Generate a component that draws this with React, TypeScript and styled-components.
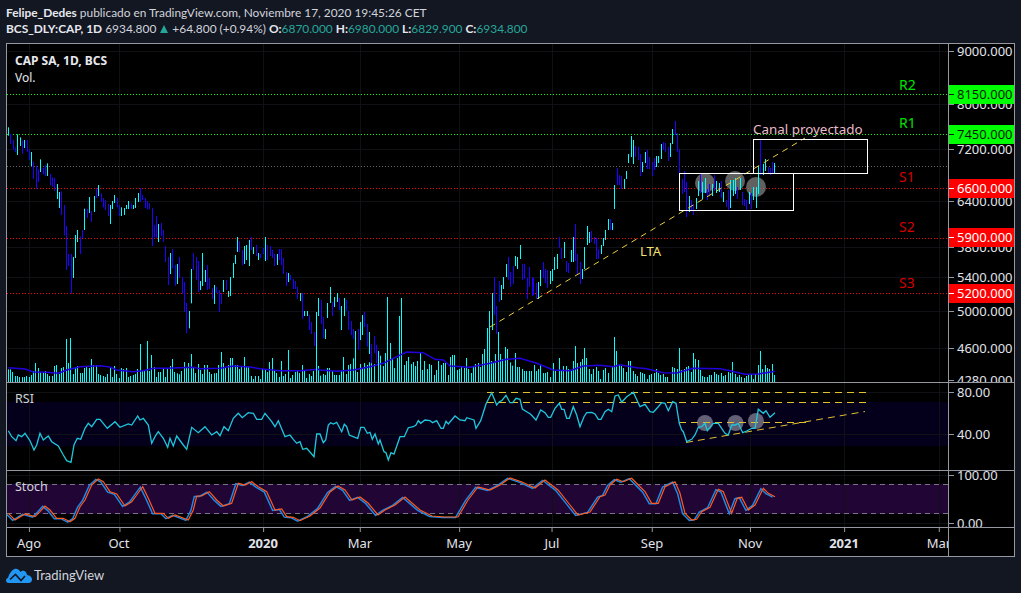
import React from "react";
import styled, { createGlobalStyle } from "styled-components";

const UP = "#00ffff";
const DOWN = "#2200ff";
const FONT = `"Noto Sans", "Open Sans", sans-serif`;
const NARROW = `Lato, "Noto Sans", sans-serif`;

const GlobalStyle = createGlobalStyle`
    html, body {
        margin: 0;
        padding: 0;
        background: #131722;
    }
`;

// price bars traced from the chart: "x,top,bottom,u|d" in crops scaled 3x
const barsA = `25,22,47,u 31,42,72,d 40,60,88,d 46,82,96,d 52,43,105,u 61,52,78,u 67,62,101,d 73,60,84,u 82,60,95,d 88,88,120,d 94,96,138,u 100,125,177,d 109,138,207,d 115,148,186,d 121,118,156,u 130,144,163,d 136,136,168,d 142,130,168,u 151,162,196,d 157,172,200,d 163,174,213,d 172,192,237,u 178,216,264,u 184,214,285,d 193,255,346,d 199,318,450,d 205,402,438,d 214,402,521,d 220,411,474,u 226,345,414,u 232,330,366,u 241,350,402,d 247,330,354,d 253,266,330,u 262,266,294,d 268,231,279,u 274,273,306,d 283,228,276,u 289,204,234,d 295,195,228,u 304,220,244,d 310,234,262,d 316,240,270,d 325,252,288,d 331,255,312,u 337,243,267,u 343,225,249,u 352,234,262,d 358,255,288,d 364,262,288,u 373,264,285,u 379,255,267,u 385,243,267,u 394,250,267,d 400,255,267,u 406,234,264,u 415,219,246,u 421,204,246,d 427,225,240,d 436,234,264,d 442,243,268,d 448,249,268,d 457,264,378,d 463,315,352,d 469,288,354,d 475,312,366,u 484,309,348,d 490,330,366,d 496,378,426,d 505,411,495,d 511,399,462,u 517,387,445,d 526,435,498,d 532,432,492,u 538,411,474,d 547,471,522,d 553,486,576,d 559,549,640,d 568,573,625,u 574,447,550,u 580,399,450,d 589,411,480,d 595,423,516,d 601,483,510,u 607,399,498,u 616,450,486,u 622,435,510,d 628,474,507,d 637,504,537,d 643,495,552,u 649,501,519,d 658,510,576,d 664,519,552,d 670,480,516,u 679,480,510,d 685,513,531,u 691,471,528,u 700,429,474,u 706,405,432,u 712,351,396,u 718,363,396,d 727,390,435,d 733,378,432,u 739,375,420,u 748,360,438,u 754,351,390,d 760,381,402,u 769,375,408,d 775,399,420,u 781,402,414,d 790,384,402,d 796,351,423,u 802,375,420,d 811,378,408,d 817,390,414,d 823,402,438,d 832,402,435,u 838,387,420,d 844,387,435,d 850,414,462,d 859,456,498,d 865,459,486,u 871,465,480,d 880,477,507,d 886,483,507,d 892,501,537,d 901,519,543,u 907,519,597,d 913,573,588,u 922,573,588,u 928,585,630,d 934,606,642,d 943,636,678,d 949,576,770,u 955,534,588,u`;
const barsB = `3,300,372,d 10,351,414,d 16,387,417,u 22,309,354,u 31,261,309,u 37,306,348,d 43,291,321,u 52,279,306,u 58,294,330,d 64,318,390,u 73,294,348,u 79,300,333,d 85,333,390,d 94,363,405,d 100,387,417,d 106,396,450,u 115,387,450,d 121,366,420,u 127,345,405,u 133,336,381,d 142,372,440,d 148,396,462,u 154,432,490,d 163,408,460,d 169,435,490,d 175,456,546,u 501,387,453,u 507,333,453,u 516,279,390,u 522,231,345,d 528,318,402,d 537,243,306,d 543,255,300,u 549,231,267,u 558,192,231,u 564,171,240,d 570,216,261,d 579,198,252,d 585,168,198,u 591,171,207,u 600,135,177,u 606,192,240,d 612,192,237,d 621,234,297,d 627,201,261,d 636,231,288,d 640,234,285,d 648,249,297,d 654,246,297,u 660,210,258,u 669,186,234,d 675,207,249,d 681,210,264,d 690,213,252,u 696,207,243,u 702,171,210,u 711,162,207,u 717,111,144,d 723,144,177,d 732,126,174,u 738,183,216,d 744,189,219,d 753,150,186,u 759,111,186,u 765,72,183,d 771,162,222,d 780,186,252,d 786,207,237,u 792,141,207,u 801,78,135,u 807,96,129,u 813,93,126,d 822,111,132,d 828,114,177,d 834,147,177,d 843,135,162,u 849,114,138,u 855,90,120,u`;
const barsC = `25,297,330,u 31,297,330,d 37,309,330,u 43,195,267,u 52,144,195,d 58,165,195,d 64,168,207,d 73,177,207,u 79,153,177,u 85,102,129,u 94,48,111,u 100,60,132,u 106,78,111,d 115,81,120,d 121,102,168,d 127,126,156,u 136,96,129,u 142,90,147,d 148,111,147,d 157,126,168,d 163,114,150,d 169,108,141,u 175,108,129,u 184,72,117,u 190,66,90,d 196,69,96,d 205,81,123,d 211,69,111,u 217,27,72,u 226,3,45,d 232,39,96,d 238,87,165,d 247,177,222,d 253,153,216,d 259,186,291,d 268,228,276,u 274,240,270,d 280,252,285,d 289,234,267,u 295,183,228,u 301,159,219,d 307,186,237,u 316,174,219,u 322,207,240,d 328,192,228,d 337,192,228,u 343,165,213,d 349,183,219,u 358,189,216,u 364,183,234,d 370,216,246,u 379,240,261,d 385,210,270,d 391,180,264,u 400,180,228,u 406,174,222,u 412,201,237,d 421,174,210,u 427,216,255,d 433,237,258,d 439,240,273,d 448,216,252,u 454,219,267,d 460,201,240,u 469,201,264,u 475,138,222,u 481,60,165,d 490,132,165,u 496,117,153,u 505,141,162,d 511,144,165,d 517,126,159,d 523,129,162,u`;

// volume bars: "x:top" in the same crops
const volA = `25:748 31:748 37:756 46:768 52:768 58:771 67:771 73:771 79:768 88:771 94:765 100:753 106:729 115:744 121:756 130:756 136:753 142:762 148:768 157:768 163:738 169:735 178:762 184:744 190:741 199:657 205:729 211:654 220:762 226:741 232:738 241:759 247:759 253:744 259:738 268:744 274:717 280:735 289:735 295:762 301:765 310:768 316:771 322:762 331:744 337:771 343:738 349:762 358:774 364:744 370:747 379:744 385:771 391:768 400:765 406:762 412:747 421:672 427:753 433:753 442:663 448:753 454:705 463:741 469:771 475:756 481:756 490:747 496:771 502:747 511:738 517:717 523:756 532:760 538:763 544:753 553:726 559:741 565:729 574:702 580:741 586:759 595:732 601:750 607:762 613:735 622:735 628:756 634:762 643:760 649:759 655:735 664:696 670:729 676:744 685:735 691:714 697:714 706:735 712:735 718:747 724:741 733:711 739:741 745:741 754:768 760:777 766:768 775:768 781:777 787:747 796:750 802:756 808:726 817:714 823:753 829:759 838:771 844:723 850:768 856:762 865:690 871:774 877:765 886:756 892:753 898:759 907:735 913:750 919:774 928:762 934:768 940:753 949:576 955:738`;
const volB = `1:530 10:525 16:528 22:507 28:507 37:516 43:528 49:528 58:528 64:516 70:474 79:525 85:498 91:495 100:478 106:396 112:519 121:495 127:507 133:492 142:498 148:490 154:486 163:495 175:456 181:470 190:501 196:462 202:294 211:432 217:477 223:507 232:477 238:351 244:297 253:498 259:486 265:474 274:495 280:489 286:501 292:486 301:459 307:513 313:486 322:510 328:495 334:498 343:528 349:513 355:486 364:498 370:492 376:492 385:528 391:474 397:468 403:468 412:513 418:510 424:504 433:507 439:477 445:510 454:522 460:504 466:495 475:492 481:504 487:465 493:450 502:387 508:447 514:486 520:492 526:465 535:399 541:465 547:480 556:444 562:450 571:490 577:500 586:462 592:504 598:504 607:510 613:516 619:516 628:516 634:516 643:498 649:516 655:510 661:498 670:522 676:522 682:519 691:534 700:492 706:516 718:477 724:516 730:501 739:501 745:510 754:516 760:486 766:441 772:492 781:489 787:480 793:447 799:477 808:510 814:525 820:510 829:504 835:516 841:540 850:513 856:507 865:522 877:504 883:414 889:456 898:498 904:501 910:507 919:519 925:486 931:486 940:516 946:525 952:531`;
const volC = `22:141 31:126 37:129 43:132 52:147 58:135 64:132 73:129 79:117 85:129 91:135 100:132 106:141 112:141 127:111 133:114 142:117 148:54 154:120 163:117 169:111 175:108 184:126 190:69 196:87 205:90 211:120 217:138 223:141 232:141 238:135 244:135 253:126 259:132 265:135 274:129 280:138 286:135 295:126 301:129 307:96 316:132 322:141 328:135 334:141 343:144 349:138 355:135 364:132 370:147 376:132 385:105 391:63 397:117 406:105 412:114 418:117 427:102 433:135`;

type Point = [number, number];

const parseBars = (src: string, ox: number, oy: number) =>
    src.split(" ").map((b) => {
        const [x, t, m, dir] = b.split(",");
        return { x: ox + Number(x) / 3, top: oy + Number(t) / 3, bottom: oy + Number(m) / 3, up: dir === "u" };
    });

const parseVol = (src: string, ox: number, oy: number) =>
    src.split(" ").map((b) => {
        const [x, t] = b.split(":");
        return { x: ox + Number(x) / 3, top: oy + Number(t) / 3 };
    });

const scale = (pts: number[], ox: number, oy: number): Point[] => {
    const out: Point[] = [];
    for (let i = 0; i < pts.length; i += 2) out.push([ox + pts[i] / 3, oy + pts[i + 1] / 3]);
    return out;
};

const line = (pts: Point[], dx = 0, dy = 0) => pts.map(([x, y]) => `${(x + dx).toFixed(1)},${(y + dy).toFixed(1)}`).join(" ");

const priceBars = [...parseBars(barsA, 0, 120), ...parseBars(barsB, 320, 200), ...parseBars(barsC, 600, 120)];
const volumeBars = [...parseVol(volA, 0, 120), ...parseVol(volB, 320, 200).map((v) => ({ x: v.x, top: v.top - 1 })), ...parseVol(volC, 630, 330)];

const volumeMa: Point[] = [
    ...scale([25, 743, 75, 747, 100, 756, 140, 757, 175, 760, 200, 750, 240, 740, 300, 737, 330, 741, 350, 750, 400, 755, 430, 752, 460, 745, 500, 745, 580, 742, 600, 746, 660, 745, 700, 738, 750, 741, 780, 746, 840, 752, 900, 752, 955, 748], 0, 120),
    ...scale([0, 510, 50, 514, 100, 510, 150, 500, 190, 490, 230, 470, 260, 456, 310, 458, 345, 478, 370, 480, 390, 498, 450, 502, 510, 490, 560, 478, 600, 475, 650, 490, 700, 510, 750, 512, 790, 498, 840, 496, 880, 500, 900, 494, 950, 503], 320, 200),
    ...scale([30, 114, 50, 116, 100, 128, 140, 129, 190, 115, 270, 116, 300, 122, 345, 133, 385, 132, 435, 124], 630, 330),
];

const rsi: Point[] = [
    ...scale([25, 182, 35, 200, 48, 212, 55, 195, 65, 200, 75, 190, 90, 212, 102, 240, 110, 225, 120, 190, 130, 210, 145, 198, 155, 215, 175, 228, 190, 255, 200, 272, 213, 277, 222, 225, 232, 205, 242, 208, 255, 175, 265, 160, 275, 170, 290, 148, 300, 148, 322, 175, 345, 155, 360, 172, 385, 162, 395, 165, 413, 138, 420, 150, 430, 145, 445, 165, 455, 220, 465, 200, 475, 185, 490, 205, 503, 232, 510, 205, 520, 228, 530, 198, 550, 225, 560, 238, 575, 172, 595, 188, 615, 170, 635, 195, 650, 185, 660, 197, 672, 170, 685, 182, 700, 145, 715, 130, 727, 143, 745, 128, 760, 130, 770, 148, 785, 148, 795, 130, 815, 155, 825, 170, 835, 152, 855, 200, 870, 195], 0, 370),
    ...scale([0, 165, 10, 178, 20, 190, 30, 185, 38, 208, 50, 205, 72, 230, 80, 162, 90, 162, 100, 188, 107, 180, 115, 135, 122, 128, 130, 132, 140, 127, 155, 155, 163, 133, 170, 140, 178, 165, 195, 172, 203, 175, 212, 142, 222, 142, 232, 160, 240, 157, 247, 178, 255, 162, 265, 192, 270, 180, 282, 215, 288, 218, 295, 240, 303, 218, 312, 222, 330, 170, 343, 170, 355, 143, 370, 140, 378, 135, 385, 122, 392, 130, 405, 120, 420, 122, 428, 128, 440, 122, 453, 145, 460, 145, 468, 124, 475, 132, 495, 108, 510, 120, 525, 122, 530, 113, 552, 120, 558, 145, 572, 122, 588, 72, 605, 38, 620, 75, 628, 65, 635, 62, 648, 46, 660, 68, 668, 68, 678, 55, 690, 58, 697, 87, 710, 95, 722, 103, 738, 120, 752, 90, 765, 98, 775, 112, 782, 112, 795, 85, 808, 70, 815, 88, 822, 88, 830, 115, 838, 115, 850, 80, 860, 105, 870, 140, 882, 110, 890, 98, 905, 97, 915, 102, 925, 118, 933, 118], 290, 380),
    ...scale([15, 125, 25, 118, 35, 125, 45, 78, 55, 75, 65, 97, 80, 80, 100, 67, 120, 110, 135, 103, 150, 125, 160, 127, 175, 110, 185, 98, 195, 100, 205, 122, 218, 95, 228, 100, 238, 160, 245, 180, 250, 185, 260, 215, 275, 208, 285, 195, 295, 172, 305, 170, 315, 160, 322, 182, 340, 160, 355, 160, 375, 190, 385, 195, 395, 165, 405, 165, 415, 160, 428, 188, 440, 183, 455, 175, 465, 175, 475, 118, 490, 130, 498, 122, 510, 142, 525, 128], 600, 370),
];

const stochD: Point[] = [
    ...scale([25, 430, 45, 450, 75, 432, 105, 440, 120, 425, 135, 408, 150, 420, 170, 445, 190, 445, 210, 455, 225, 445, 240, 410, 255, 390, 275, 345, 295, 327, 310, 335, 330, 365, 350, 372, 375, 408, 395, 395, 410, 375, 428, 350, 445, 385, 465, 430, 490, 430, 505, 445, 525, 435, 565, 450, 580, 420, 590, 378, 605, 378, 628, 365, 650, 390, 670, 408, 695, 400, 715, 340, 735, 345, 755, 335, 775, 350, 800, 365, 825, 420, 845, 417, 860, 440, 880, 442, 900, 452], 0, 370),
    [310, 516], [320, 508], [330, 492], [338, 486], [345, 490], [352, 500], [360, 497], [368, 503], [378, 515], [385, 510], [395, 505], [405, 497], [420, 510], [432, 516], [445, 517], [458, 517], [468, 500], [478, 487], [490, 490], [500, 485], [510, 478], [522, 482], [535, 488], [545, 480], [558, 490], [570, 505], [578, 515], [590, 512],
    ...scale([0, 380, 15, 375, 30, 345, 50, 328, 70, 335, 95, 325, 115, 345, 135, 365, 155, 400, 175, 400, 195, 350, 225, 335, 240, 370, 255, 430, 275, 450, 290, 448, 305, 425, 330, 412, 355, 358, 370, 365, 395, 430, 412, 385, 425, 382, 445, 420, 465, 405, 490, 355, 505, 370, 525, 380], 600, 370),
];

const GRID_X = [29, 119, 263, 360, 459, 552, 652, 750, 844, 939];
const PLOT_LEFT = 7;
const PLOT_RIGHT = 948;

const Page = styled.div`
    width: 1021px;
    height: 593px;
    background: #131722;
    color: #d1d4dc;
    font-family: ${FONT};
    overflow: hidden;
`;

const Header = styled.header`
    height: 43px;
    padding: 5px 0 0 6px;
    box-sizing: border-box;
    font-family: ${NARROW};
    font-size: 11.9px;
    line-height: 16px;
    white-space: nowrap;
`;

const Strong = styled.b`
    font-weight: 700;
    color: #e6e8ee;
`;

const Quote = styled.span`
    color: #26a69a;
`;

const UpTriangle = styled.i`
    display: inline-block;
    width: 0;
    height: 0;
    margin: 0 1px;
    border-left: 4.5px solid transparent;
    border-right: 4.5px solid transparent;
    border-bottom: 8px solid #26a69a;
`;

const Frame = styled.section`
    width: 1009px;
    margin-left: 6px;
    border: 1px solid #9598a1;
    box-sizing: border-box;
    background: #000;
`;

const Pane = styled.div<{ $height: number; $last?: boolean }>`
    display: flex;
    box-sizing: border-box;
    height: ${({ $height }) => $height}px;
    border-bottom: ${({ $last }) => ($last ? "none" : "1px solid #9598a1")};
`;

const Plot = styled.div`
    position: relative;
    width: 941px;
    overflow: hidden;
`;

const Chart = styled.svg`
    display: block;
`;

const Axis = styled.div`
    position: relative;
    flex: 1;
    border-left: 1px solid #9598a1;
    overflow: hidden;
    font-size: 13px;
`;

const Legend = styled.div`
    position: absolute;
    left: 8px;
    top: 8px;
    font-size: 12px;
    line-height: 17px;
    color: #e6e8ee;
`;

const PaneTitle = styled.div<{ $top: number }>`
    position: absolute;
    left: 8px;
    top: ${({ $top }) => $top}px;
    font-size: 12.5px;
    line-height: 16px;
    color: #d1d4dc;
`;

const Tick = styled.div<{ $top: number }>`
    position: absolute;
    left: 0;
    right: 0;
    top: ${({ $top }) => $top}px;
    height: 16px;
    line-height: 16px;
    padding-left: 8px;
    margin-top: -8px;
    color: #e0e3eb;

    &::before {
        content: "";
        position: absolute;
        left: 0;
        top: 8px;
        width: 5px;
        height: 1px;
        background: #9598a1;
    }
`;

const PriceTag = styled.div<{ $top: number; $bg: string; $fg: string }>`
    position: absolute;
    left: 0;
    right: 0;
    top: ${({ $top }) => $top}px;
    height: 19px;
    line-height: 19px;
    padding-left: 8px;
    margin-top: -9px;
    background: ${({ $bg }) => $bg};
    color: ${({ $fg }) => $fg};

    &::before {
        content: "";
        position: absolute;
        left: 0;
        top: 9px;
        width: 5px;
        height: 1px;
        background: ${({ $fg }) => $fg};
    }
`;

const TimeScale = styled.div`
    position: relative;
    width: 941px;
    overflow: hidden;
    font-size: 13px;
`;

const TimeLabel = styled.span<{ $left: number; $bold?: boolean }>`
    position: absolute;
    left: ${({ $left }) => $left}px;
    top: 6px;
    line-height: 18px;
    transform: translateX(-50%);
    font-weight: ${({ $bold }) => ($bold ? 700 : 400)};
    color: #e0e3eb;

    &::before {
        content: "";
        position: absolute;
        left: 50%;
        top: -6px;
        width: 1px;
        height: 4px;
        background: #9598a1;
    }
`;

const TimeCorner = styled.div`
    flex: 1;
    border-left: 1px solid #9598a1;
`;

const Footer = styled.footer`
    display: flex;
    align-items: center;
    gap: 2px;
    height: 36px;
    padding-left: 6px;
    font-family: ${NARROW};
    font-size: 13px;
    color: #d1d4dc;
`;

const GridLines = ({ y0, y1, rows }: { y0: number; y1: number; rows: number[] }) => (
    <g stroke="#0f1115" strokeWidth="1">
        {GRID_X.map((x) => (
            <line key={x} x1={x + 0.5} x2={x + 0.5} y1={y0} y2={y1} />
        ))}
        {rows.map((y) => (
            <line key={y} x1={PLOT_LEFT} x2={PLOT_RIGHT} y1={y + 0.5} y2={y + 0.5} />
        ))}
    </g>
);

const LEVELS = [
    { y: 94, color: "#00ff00" },
    { y: 134, color: "#00ff00" },
    { y: 166, color: "#666666" },
    { y: 188, color: "#ff0000" },
    { y: 238, color: "#ff0000" },
    { y: 293, color: "#ff0000" },
];

const LEVEL_TEXT = [
    { t: "R2", y: 90, c: "#00e000" },
    { t: "R1", y: 128, c: "#00e000" },
    { t: "S1", y: 182, c: "#d40000" },
    { t: "S2", y: 232, c: "#d40000" },
    { t: "S3", y: 288, c: "#d40000" },
];

const MainChart = () => (
    <Chart width={941} height={338} viewBox="7 44 941 338">
        <GridLines y0={44} y1={382} rows={[51, 104, 149, 201, 247, 277, 311, 348]} />
        {LEVELS.map((l) => (
            <line key={l.y} x1={PLOT_LEFT} x2={PLOT_RIGHT} y1={l.y + 0.5} y2={l.y + 0.5} stroke={l.color} strokeDasharray="1 2" />
        ))}
        <circle cx={705} cy={183} r={10} fill="#787878" fillOpacity={0.8} />
        <circle cx={735} cy={181} r={10} fill="#787878" fillOpacity={0.8} />
        <circle cx={756} cy={187} r={10} fill="#787878" fillOpacity={0.8} />
        {volumeBars.map((v, i) => (
            <rect key={i} x={Math.round(v.x)} y={v.top} width={1} height={Math.max(382 - v.top, 1)} fill={UP} />
        ))}
        <polyline points={line(volumeMa)} fill="none" stroke="#2200dd" strokeWidth={1.5} />
        {priceBars.map((b, i) => (
            <rect key={i} x={Math.round(b.x)} y={b.top} width={1} height={b.bottom - b.top} fill={b.up ? UP : DOWN} />
        ))}
        <line x1={490} y1={327} x2={805} y2={138} stroke="#e8cf3f" strokeDasharray="6 5" />
        <rect x={679.5} y={173.5} width={114} height={37} fill="none" stroke="#fff" />
        <rect x={753.5} y={139.5} width={114} height={34} fill="none" stroke="#fff" />
        {LEVEL_TEXT.map((l) => (
            <text key={l.t} x={899} y={l.y} fontSize={14} fill={l.c} fontFamily={FONT}>
                {l.t}
            </text>
        ))}
        <text x={753} y={134} fontSize={13.4} fill="#e8bcc8" fontFamily={FONT}>
            Canal proyectado
        </text>
        <text x={640} y={256} fontSize={13} fill="#f5e070" fontFamily={FONT}>
            LTA
        </text>
    </Chart>
);

const RsiChart = () => (
    <Chart width={941} height={87} viewBox="7 383 941 87">
        <rect x={PLOT_LEFT} y={402} width={941} height={44} fill="#04001c" />
        <GridLines y0={383} y1={470} rows={[392, 434]} />
        <circle cx={705} cy={423} r={8} fill="#8a8a9c" fillOpacity={0.7} />
        <circle cx={735.5} cy={423} r={8} fill="#8a8a9c" fillOpacity={0.7} />
        <circle cx={756} cy={421} r={8} fill="#8a8a9c" fillOpacity={0.7} />
        <g stroke="#e0c030" strokeDasharray="7 5" fill="none">
            <line x1={487} x2={867} y1={392.5} y2={392.5} />
            <line x1={487} x2={867} y1={402.5} y2={402.5} />
            <line x1={679} x2={810} y1={422.5} y2={422.5} />
            <line x1={686} y1={442.5} x2={865} y2={411.5} />
        </g>
        <polyline points={line(rsi)} fill="none" stroke="#1ec8dc" strokeWidth={1.3} />
    </Chart>
);

const StochChart = () => (
    <Chart width={941} height={56} viewBox="7 471 941 56">
        <rect x={PLOT_LEFT} y={484} width={941} height={30} fill="#210535" />
        <GridLines y0={471} y1={527} rows={[475, 523]} />
        <g stroke="#787486" strokeDasharray="5 4">
            <line x1={PLOT_LEFT} x2={PLOT_RIGHT} y1={484.5} y2={484.5} />
            <line x1={PLOT_LEFT} x2={PLOT_RIGHT} y1={513.5} y2={513.5} />
        </g>
        <polyline points={line(stochD, -2.4, 0.4)} fill="none" stroke="#1e88e5" strokeWidth={1.5} />
        <polyline points={line(stochD)} fill="none" stroke="#ff5a1f" strokeWidth={1.2} />
    </Chart>
);

const TradingViewLogo = () => (
    <svg width="26" height="15" viewBox="0 0 26 15">
        <path d="M2.5 15C1 15 0 13.9 0 12.5c0-1.2.8-2.2 2-2.4C3 6 6 1.5 9 .8c2.6-.5 4.3 1 5.5 3.2.8-1 2-1.5 3.2-1.2 2 .4 3 2.2 3.3 4.2 2.7.2 5 2 5 4.7C26 13.5 24.6 15 22.5 15Z" fill="#2196f3" />
        <path d="M4 11.5 9.5 6.5 15 12.5 19 8" fill="none" stroke="#131722" strokeWidth="1.6" />
    </svg>
);

const PRICE_TICKS = [
    { l: "9000.000", y: 7 },
    { l: "8000.000", y: 60 },
    { l: "7200.000", y: 105 },
    { l: "6400.000", y: 157 },
    { l: "5800.000", y: 203 },
    { l: "5400.000", y: 233 },
    { l: "5000.000", y: 267 },
    { l: "4600.000", y: 304 },
    { l: "4280.000", y: 336 },
];

const PRICE_TAGS = [
    { l: "8150.000", y: 50, bg: "#00ff00", fg: "#0a1a0a" },
    { l: "7450.000", y: 90, bg: "#00ff00", fg: "#0a1a0a" },
    { l: "6600.000", y: 144, bg: "#ff0000", fg: "#ffffff" },
    { l: "5900.000", y: 193, bg: "#ff0000", fg: "#ffffff" },
    { l: "5200.000", y: 249, bg: "#ff0000", fg: "#ffffff" },
];

const TIME_LABELS = [
    { l: "Ago", x: 22 },
    { l: "Oct", x: 112 },
    { l: "2020", x: 256, bold: true },
    { l: "Mar", x: 353 },
    { l: "May", x: 452 },
    { l: "Jul", x: 545 },
    { l: "Sep", x: 645 },
    { l: "Nov", x: 743 },
    { l: "2021", x: 837, bold: true },
    { l: "Mar", x: 932 },
];

const App = () => {
    return (
        <Page>
            <GlobalStyle />
            <Header>
                <div>
                    <Strong>Felipe_Dedes</Strong> publicado en TradingView.com, Noviembre 17, 2020 19:45:26 CET
                </div>
                <div>
                    <Strong>BCS_DLY:CAP, 1D</Strong> 6934.800 <UpTriangle /> +64.800 (+0.94%) <Strong>O:</Strong>
                    <Quote>6870.000</Quote> <Strong>H:</Strong>
                    <Quote>6980.000</Quote> <Strong>L:</Strong>
                    <Quote>6829.900</Quote> <Strong>C:</Strong>
                    <Quote>6934.800</Quote>
                </div>
            </Header>
            <Frame>
                <Pane $height={339}>
                    <Plot>
                        <MainChart />
                        <Legend>
                            <Strong>CAP SA, 1D, BCS</Strong>
                            <div>Vol.</div>
                        </Legend>
                    </Plot>
                    <Axis>
                        {PRICE_TICKS.map((t) => (
                            <Tick key={t.l} $top={t.y}>
                                {t.l}
                            </Tick>
                        ))}
                        {PRICE_TAGS.map((t) => (
                            <PriceTag key={t.l} $top={t.y} $bg={t.bg} $fg={t.fg}>
                                {t.l}
                            </PriceTag>
                        ))}
                    </Axis>
                </Pane>
                <Pane $height={88}>
                    <Plot>
                        <RsiChart />
                        <PaneTitle $top={8}>RSI</PaneTitle>
                    </Plot>
                    <Axis>
                        <Tick $top={9}>80.00</Tick>
                        <Tick $top={51}>40.00</Tick>
                    </Axis>
                </Pane>
                <Pane $height={57}>
                    <Plot>
                        <StochChart />
                        <PaneTitle $top={8}>Stoch</PaneTitle>
                    </Plot>
                    <Axis>
                        <Tick $top={4}>100.00</Tick>
                        <Tick $top={52}>0.00</Tick>
                    </Axis>
                </Pane>
                <Pane $height={28} $last>
                    <TimeScale>
                        {TIME_LABELS.map((t) => (
                            <TimeLabel key={t.l + t.x} $left={t.x} $bold={t.bold}>
                                {t.l}
                            </TimeLabel>
                        ))}
                    </TimeScale>
                    <TimeCorner />
                </Pane>
            </Frame>
            <Footer>
                <TradingViewLogo />
                <span>TradingView</span>
            </Footer>
        </Page>
    );
};

export default App;
